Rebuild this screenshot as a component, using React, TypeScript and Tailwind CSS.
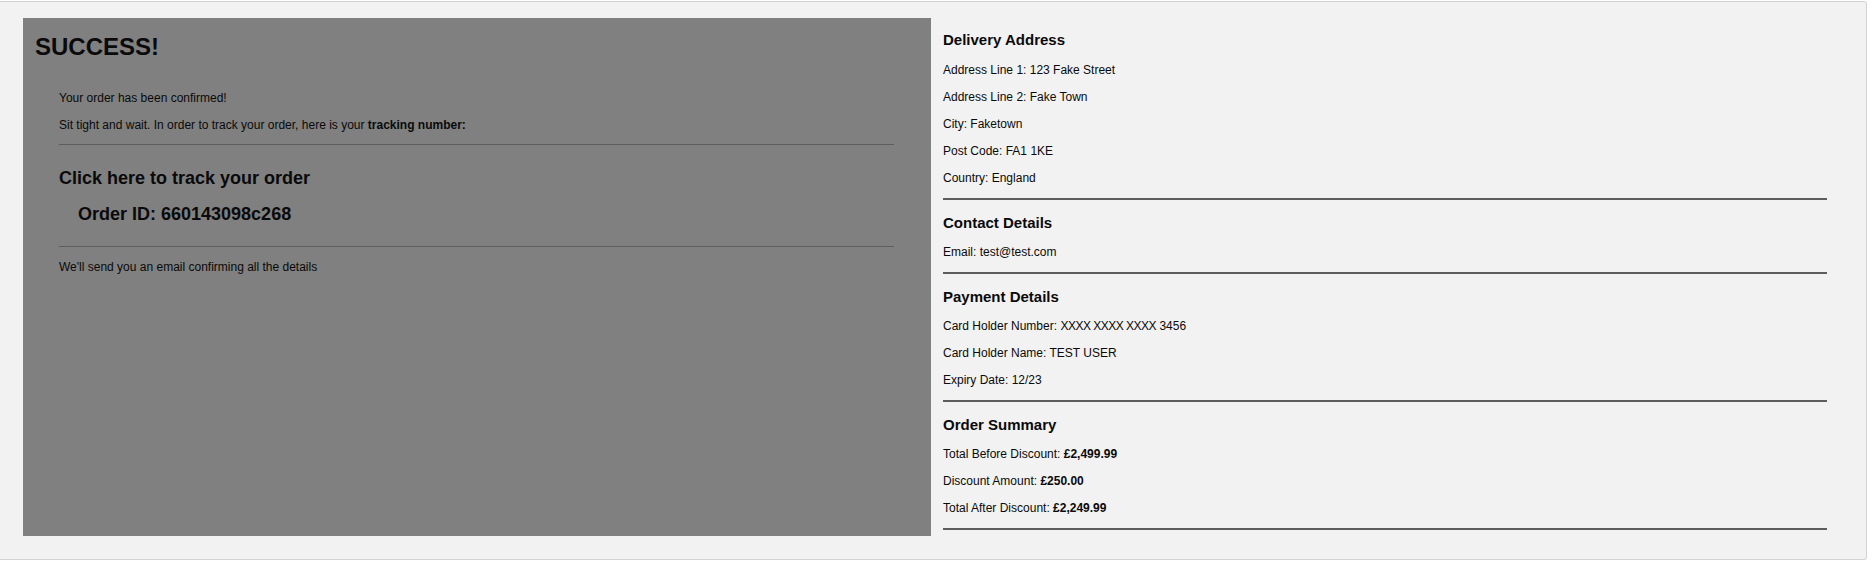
const delivery = [
  "Address Line 1: 123 Fake Street",
  "Address Line 2: Fake Town",
  "City: Faketown",
  "Post Code: FA1 1KE",
  "Country: England",
];

const summary = [
  { label: "Total Before Discount:", value: "£2,499.99" },
  { label: "Discount Amount:", value: "£250.00" },
  { label: "Total After Discount:", value: "£2,249.99" },
];

function Section({ title, children, first }: { title: string; children: React.ReactNode; first?: boolean }) {
  return (
    <section className={first ? "" : "mt-[8px]"}>
      <h3 className={first ? "h-[28px] text-[15px] font-bold leading-[28px]" : "h-[28px] text-[15px] font-bold leading-[30px]"}>
        {title}
      </h3>
      <div className="mt-[2px]">{children}</div>
      <hr className="mt-[7px] w-[884px] border-0 border-t-2 border-[#5c5c5c]" />
    </section>
  );
}

function Line({ children }: { children: React.ReactNode }) {
  return <p className="h-[27px] text-[12px] leading-[28px]">{children}</p>;
}

export default function App() {
  return (
    <div className="min-h-screen bg-white font-['Liberation_Sans',Arial,sans-serif] text-[#0a0a0a]">
      <div className="mt-px w-[1867px] rounded-r-[3px] border border-l-0 border-[#d3d3d3] bg-[#f2f2f2] pt-4 pb-[23px] pl-[23px]">
        <div className="flex">
          {/* Confirmation panel */}
          <div className="w-[908px] bg-[#808080] pt-[15px] pl-[12px]">
            <h1 className="h-[28px] text-[24px] font-bold leading-[28px]">SUCCESS!</h1>
            <div className="mt-[24px] pl-[24px]">
              <p className="h-[27px] text-[12px] leading-[27px]">Your order has been confirmed!</p>
              <p className="h-[27px] text-[12px] leading-[27px]">
                Sit tight and wait. In order to track your order, here is your <b>tracking number:</b>
              </p>
              <div className="mt-[5px] h-px w-[835px] bg-[#5e5e5e]" />
              <a href="#" className="mt-[21px] block h-[24px] text-[18px] font-bold leading-[24px]">
                Click here to track your order
              </a>
              <p className="mt-[12px] h-[24px] pl-[19px] text-[18px] font-bold leading-[24px]">
                Order ID: 660143098c268
              </p>
              <div className="mt-[20px] h-px w-[835px] bg-[#5e5e5e]" />
              <p className="mt-[7px] h-[27px] text-[12px] leading-[27px]">
                We'll send you an email confirming all the details
              </p>
            </div>
          </div>

          {/* Order details */}
          <div className="pt-[8px] pl-[12px] pb-[6px]">
            <Section title="Delivery Address" first>
              {delivery.map((d) => (
                <Line key={d}>{d}</Line>
              ))}
            </Section>
            <Section title="Contact Details">
              <Line>Email: test@test.com</Line>
            </Section>
            <Section title="Payment Details">
              <Line>
                Card Holder Number: <span className="tracking-[-0.5px]">XXXX XXXX XXXX</span> 3456
              </Line>
              <Line>Card Holder Name: TEST USER</Line>
              <Line>Expiry Date: 12/23</Line>
            </Section>
            <Section title="Order Summary">
              {summary.map((s) => (
                <Line key={s.label}>
                  {s.label} <b>{s.value}</b>
                </Line>
              ))}
            </Section>
          </div>
        </div>
      </div>
    </div>
  );
}
